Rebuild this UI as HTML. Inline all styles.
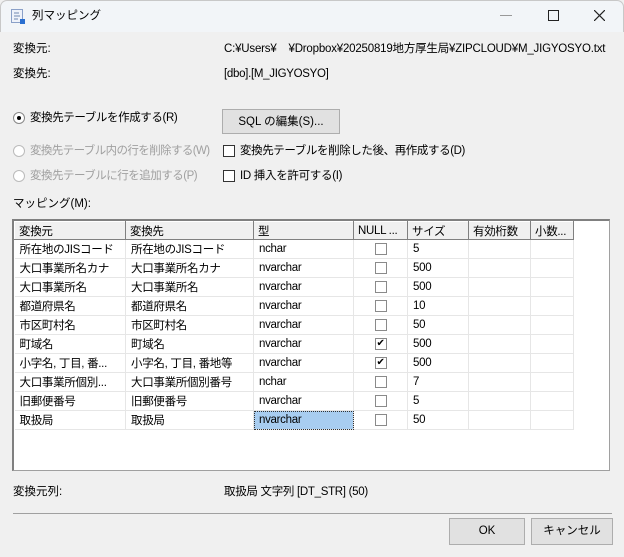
<!DOCTYPE html>
<html><head><meta charset="utf-8"><style>
*{margin:0;padding:0;box-sizing:border-box}
body{width:624px;height:557px;background:#f0f0f0;font-family:"Liberation Sans","Noto Sans CJK JP",sans-serif;font-size:11.5px;color:#000;position:relative;overflow:hidden}
.a{position:absolute;white-space:nowrap;line-height:14px}
.title{position:absolute;left:0;top:0;width:624px;height:32px;background:#f2f5f8;border:1px solid #c8c8c8;border-bottom:none;border-radius:7px 7px 0 0}
.dis{color:#a0a0a0}
.btn{position:absolute;background:#e1e1e1;border:1px solid #adadad;text-align:center;line-height:24px}
.cb{position:absolute;width:12px;height:12px;border:1px solid #333;background:#fff}
.rb{position:absolute;width:12px;height:12px;border:1px solid #888;border-radius:50%;background:#fff}
.grid{position:absolute;left:12px;top:219px;width:598px;height:252px;background:#fff;border:1px solid #a0a0a0;border-top:2px solid #808080;border-left:2px solid #808080}
table{border-collapse:collapse;position:absolute;left:0;top:0;table-layout:fixed}
td,th{height:19px;border-right:1px solid #e6e6e6;border-bottom:1px solid #e6e6e6;font-weight:normal;text-align:left;padding-left:5px;white-space:nowrap;overflow:hidden;font-size:11.5px;letter-spacing:-0.3px}
th{background:#f0f0f0;border:1px solid #fff;border-right:1px solid #808080;border-bottom:1px solid #808080;height:18px;padding-left:4px}
td.c{text-align:center;padding:0}
.ck{display:inline-block;width:12px;height:12px;border:1px solid #8a8a8a;background:#fff;vertical-align:middle;font-size:10px;line-height:10px;text-align:center}
.sel{background:#a8cdf0;outline:1px dotted #333;outline-offset:-1px}
</style></head><body>
<div class="title"></div>
<svg class="a" style="left:11px;top:9px" width="14" height="15" viewBox="0 0 14 15"><rect x="0.5" y="0.5" width="11" height="13" fill="#eef2fa" stroke="#8aa0c8"/><path d="M3 4h5M3 7h6M3 10h4" stroke="#7088b0"/><rect x="9" y="10" width="5" height="5" fill="#2a6fd0"/></svg>
<div class="a" style="left:32px;top:9px">列マッピング</div>
<div class="a" style="left:500px;top:15px;width:12px;height:1px;background:#999"></div>
<div class="a" style="left:548px;top:10px;width:11px;height:11px;border:1px solid #222"></div>
<svg class="a" style="left:594px;top:10px" width="11" height="11"><path d="M0 0L11 11M11 0L0 11" stroke="#222" stroke-width="1.2"/></svg>

<div class="a" style="left:13px;top:42px">変換元:</div>
<div class="a" style="left:224px;top:42px;letter-spacing:-0.2px">C:¥Users¥&nbsp;&nbsp;&nbsp;&nbsp;¥Dropbox¥20250819地方厚生局¥ZIPCLOUD¥M_JIGYOSYO.txt</div>
<div class="a" style="left:13px;top:67px">変換先:</div>
<div class="a" style="left:224px;top:67px;letter-spacing:-0.3px">[dbo].[M_JIGYOSYO]</div>

<div class="rb" style="left:13px;top:112px"><div style="position:absolute;left:3px;top:3px;width:4px;height:4px;border-radius:50%;background:#000"></div></div>
<div class="a" style="left:30px;top:111px;letter-spacing:-0.4px">変換先テーブルを作成する(R)</div>
<div class="btn" style="left:222px;top:109px;width:118px;height:25px">SQL の編集(S)...</div>
<div class="rb" style="left:13px;top:145px;border-color:#bbb"></div>
<div class="a dis" style="left:30px;top:144px;letter-spacing:-0.6px">変換先テーブル内の行を削除する(W)</div>
<div class="cb" style="left:223px;top:145px"></div>
<div class="a" style="left:240px;top:144px;letter-spacing:-0.4px">変換先テーブルを削除した後、再作成する(D)</div>
<div class="rb" style="left:13px;top:170px;border-color:#bbb"></div>
<div class="a dis" style="left:30px;top:169px;letter-spacing:-0.5px">変換先テーブルに行を追加する(P)</div>
<div class="cb" style="left:223px;top:170px"></div>
<div class="a" style="left:240px;top:169px;letter-spacing:-0.3px">ID 挿入を許可する(I)</div>
<div class="a" style="left:13px;top:197px">マッピング(M):</div>

<div class="grid"><table>
<colgroup><col style="width:111px"><col style="width:128px"><col style="width:100px"><col style="width:54px"><col style="width:61px"><col style="width:62px"><col style="width:43px"></colgroup>
<tr><th>変換元</th><th>変換先</th><th>型</th><th>NULL ...</th><th>サイズ</th><th>有効桁数</th><th>小数...</th></tr>
<tr><td>所在地のJISコード</td><td>所在地のJISコード</td><td>nchar</td><td class="c"><span class="ck"></span></td><td>5</td><td></td><td></td></tr>
<tr><td>大口事業所名カナ</td><td>大口事業所名カナ</td><td>nvarchar</td><td class="c"><span class="ck"></span></td><td>500</td><td></td><td></td></tr>
<tr><td>大口事業所名</td><td>大口事業所名</td><td>nvarchar</td><td class="c"><span class="ck"></span></td><td>500</td><td></td><td></td></tr>
<tr><td>都道府県名</td><td>都道府県名</td><td>nvarchar</td><td class="c"><span class="ck"></span></td><td>10</td><td></td><td></td></tr>
<tr><td>市区町村名</td><td>市区町村名</td><td>nvarchar</td><td class="c"><span class="ck"></span></td><td>50</td><td></td><td></td></tr>
<tr><td>町域名</td><td>町域名</td><td>nvarchar</td><td class="c"><span class="ck">✔</span></td><td>500</td><td></td><td></td></tr>
<tr><td>小字名, 丁目, 番...</td><td>小字名, 丁目, 番地等</td><td>nvarchar</td><td class="c"><span class="ck">✔</span></td><td>500</td><td></td><td></td></tr>
<tr><td>大口事業所個別...</td><td>大口事業所個別番号</td><td>nchar</td><td class="c"><span class="ck"></span></td><td>7</td><td></td><td></td></tr>
<tr><td>旧郵便番号</td><td>旧郵便番号</td><td>nvarchar</td><td class="c"><span class="ck"></span></td><td>5</td><td></td><td></td></tr>
<tr><td>取扱局</td><td>取扱局</td><td class="sel">nvarchar</td><td class="c"><span class="ck"></span></td><td>50</td><td></td><td></td></tr>
</table></div>

<div class="a" style="left:13px;top:485px">変換元列:</div>
<div class="a" style="left:224px;top:485px;letter-spacing:-0.3px">取扱局 文字列 [DT_STR] (50)</div>
<div class="a" style="left:13px;top:513px;width:599px;height:1px;background:#a0a0a0"></div>
<div class="btn" style="left:449px;top:518px;width:76px;height:27px;line-height:25px">OK</div>
<div class="btn" style="left:531px;top:518px;width:82px;height:27px;line-height:25px">キャンセル</div>
</body></html>
